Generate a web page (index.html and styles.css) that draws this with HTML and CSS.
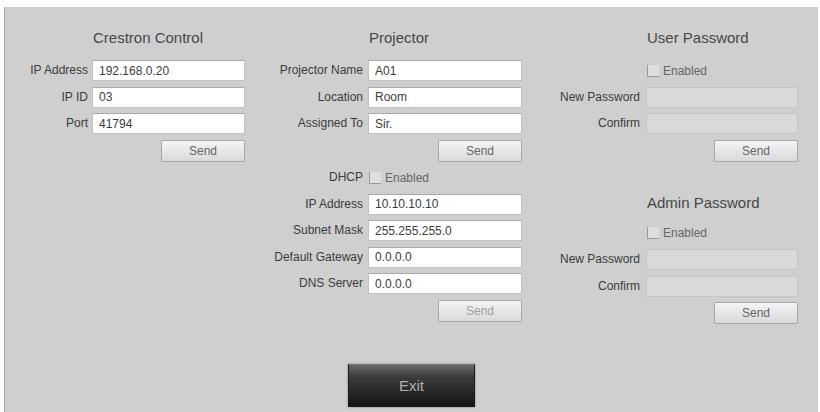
FILE: index.html
```html
<!DOCTYPE html>
<html lang="en">
<head>
  <meta charset="UTF-8">
  <meta name="viewport" content="width=device-width, initial-scale=1">
  <title>Web Setup</title>
  <link rel="stylesheet" href="styles.css">
</head>
<body>

  <div class="panel">
    <div class="columns">

      <!-- Crestron Control -->
      <div class="section crestron">
        <h2 class="title">Crestron Control</h2>
        <label>IP Address</label><input type="text" value="192.168.0.20">
        <label>IP ID</label><input type="text" value="03">
        <label>Port</label><input type="text" value="41794">
        <button class="send">Send</button>
      </div>

      <!-- Projector -->
      <div class="section projector">
        <h2 class="title">Projector</h2>
        <label>Projector Name</label><input type="text" value="A01">
        <label>Location</label><input type="text" value="Room">
        <label>Assigned To</label><input type="text" value="Sir.">
        <button class="send">Send</button>

        <label>DHCP</label>
        <div class="check"><span class="box"></span>Enabled</div>
        <label>IP Address</label><input type="text" value="10.10.10.10">
        <label>Subnet Mask</label><input type="text" value="255.255.255.0">
        <label>Default Gateway</label><input type="text" value="0.0.0.0">
        <label>DNS Server</label><input type="text" value="0.0.0.0">
        <button class="send dim">Send</button>
      </div>

      <!-- Passwords -->
      <div class="section passwords">
        <h2 class="title">User Password</h2>
        <div class="check"><span class="box"></span>Enabled</div>
        <label>New Password</label><input type="password" disabled>
        <label>Confirm</label><input type="password" disabled>
        <button class="send">Send</button>

        <h2 class="title second">Admin Password</h2>
        <div class="check"><span class="box"></span>Enabled</div>
        <label>New Password</label><input type="password" disabled>
        <label>Confirm</label><input type="password" disabled>
        <button class="send">Send</button>
      </div>

    </div>

    <div class="footer">
      <button class="exit">Exit</button>
    </div>
  </div>

</body>
</html>
```

FILE: styles.css
```css
body {
  margin: 0;
  background: #fff;
  font-family: "Liberation Sans", Arial, sans-serif;
  color: #333;
  overflow: hidden;
}

.panel {
  margin: 7px 2px 0 4px;
  height: 405px;
  background: #cfcfcf;
  border-left: 1px solid #a8a8a8;
  box-sizing: border-box;
}

.columns {
  display: flex;
  padding-left: 15px;
}

.section {
  display: grid;
  column-gap: 4px;
  row-gap: 5.5px;
  align-items: center;
  align-content: start;
}

.crestron {
  grid-template-columns: 68px 153px;
}

.projector {
  grid-template-columns: 98px 154px;
  column-gap: 5px;
  margin-left: 20px;
}

.passwords {
  grid-template-columns: 95px 152px;
  column-gap: 6px;
  margin-left: 23px;
}

.title {
  grid-column: 2;
  margin: 21px 0 6.5px 1px;
  height: 20px;
  line-height: 20px;
  font-size: 15px;
  font-weight: normal;
  color: #474747;
  white-space: nowrap;
}

.title.second {
  margin: 26px 0 4px 1px;
}

label {
  grid-column: 1;
  text-align: right;
  font-size: 12px;
  line-height: 21px;
  white-space: nowrap;
  color: #3c3c3c;
}

input {
  grid-column: 2;
  height: 21px;
  box-sizing: border-box;
  margin: 0;
  padding: 0 6px;
  border: 1px solid #c2c2c2;
  border-top-color: #aaa;
  background: #fff;
  font-family: inherit;
  font-size: 12px;
  color: #3c3c3c;
}

input:disabled {
  background: #d9d9d9;
  border-color: #c6c6c6;
}

.send {
  grid-column: 2;
  justify-self: end;
  width: 84px;
  height: 22px;
  margin: 0;
  border: 1px solid #a8a8a8;
  border-radius: 1px;
  background: linear-gradient(to bottom, #f4f4f4, #dadada);
  font-family: inherit;
  font-size: 12px;
  color: #666;
}

.send.dim {
  color: #a0a0a0;
}

.check {
  grid-column: 2;
  display: flex;
  align-items: center;
  gap: 4px;
  height: 21px;
  padding-left: 1px;
  font-size: 12px;
  color: #666;
}

.box {
  width: 11px;
  height: 11px;
  background: #dedede;
  border-left: 1px solid #999;
  border-bottom: 1px solid #999;
}

.footer {
  display: flex;
  justify-content: center;
  margin-top: 39.5px;
}

.exit {
  width: 127px;
  height: 43px;
  border: 1px solid #1c1c1c;
  border-top-color: #777;
  background: linear-gradient(to bottom, #6a6a6a 0%, #3a3a3a 30%, #151515 100%);
  font-family: inherit;
  font-size: 15px;
  color: #b0b0b0;
  box-shadow: 0 0 2px rgba(0, 0, 0, 0.4);
}
```
